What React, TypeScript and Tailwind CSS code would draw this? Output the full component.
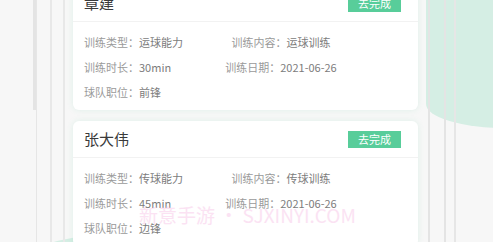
const tasks = [
  { name: '章建', type: '运球能力', content: '运球训练', duration: '30min', date: '2021-06-26', position: '前锋' },
  { name: '张大伟', type: '传球能力', content: '传球训练', duration: '45min', date: '2021-06-26', position: '边锋' },
];

function Field({ label, value }: { label: string; value: string }) {
  return (
    <span className="whitespace-nowrap">
      <span className="text-[#9a9a9a]">{label}：</span>
      <span className="text-[#7c7c7c]">{value}</span>
    </span>
  );
}

function TaskCard({ t }: { t: (typeof tasks)[number] }) {
  return (
    <div className="w-[345px] rounded-[6px] bg-white shadow-[0_0_6px_rgba(80,200,150,0.14)]">
      {/* Header */}
      <div className="flex h-[37px] items-center justify-between border-b border-[#f2f2f2] pl-[11px] pr-[17px]">
        <span className="text-[15px] text-[#3a3a3a]">{t.name}</span>
        <button className="flex h-[17px] w-[53px] items-center justify-center bg-[#58cd9a] text-[11px] leading-none text-white">
          去完成
        </button>
      </div>
      {/* Body */}
      <div className="pl-[11px] pt-[8px] pb-[5px] text-[11px] leading-[25px]">
        <div className="flex">
          <div className="w-[117px]"><Field label="训练类型" value={t.type} /></div>
          <div className="w-[160px] text-center"><Field label="训练内容" value={t.content} /></div>
        </div>
        <div className="flex">
          <div className="w-[117px]"><Field label="训练时长" value={t.duration} /></div>
          <div className="w-[160px] text-center"><Field label="训练日期" value={t.date} /></div>
        </div>
        <div className="flex">
          <Field label="球队职位" value={t.position} />
        </div>
      </div>
    </div>
  );
}

export default function App() {
  return (
    <div
      className="relative h-[242px] w-[493px] overflow-hidden bg-[#f7f7f7]"
      style={{ fontFamily: '"Noto Sans CJK SC", "Noto Sans", sans-serif' }}
    >
      {/* Mint blobs behind everything */}
      <div className="absolute left-[426px] top-[-100px] h-[228px] w-[220px] rounded-bl-[80px_24px] bg-[#d5eee4]" />
      <div className="absolute left-[22px] top-[231px] h-[80px] w-[300px] rounded-tl-[140px_30px] bg-[#d5eee4]" />

      <div className="relative flex h-full">
        {/* Left frame lines */}
        <div className="flex h-full w-[73px] shrink-0">
          <div className="w-[33px]" />
          <div className="h-[110px] w-[3px] bg-[#e4e4e4]" />
          <div className="w-[14px] border-l border-[#e6e6e6]" />
          <div className="w-[13px] border-l-2 border-[#e8e8e8]" />
          <div className="border-l-2 border-[#e8e8e8]" />
        </div>

        {/* Cards */}
        <div className="mt-[-15px] flex flex-col gap-[11px]">
          {tasks.map((t) => (
            <TaskCard key={t.name} t={t} />
          ))}
        </div>

        {/* Right frame lines */}
        <div className="flex h-full pl-[10px]">
          <div className="w-[16px] border-l-2 border-[#e4e4e4]" />
          <div className="w-[10px] border-l-2 border-[#e4e4e4]" />
          <div className="border-l-2 border-[#e6e6e6]" />
        </div>
      </div>

      {/* Watermark */}
      <div className="pointer-events-none absolute left-[139px] top-[205px] whitespace-nowrap text-[19px] leading-none text-[#fbdcf1] opacity-80">
        新意手游 · SJXINYI.COM
      </div>
    </div>
  );
}
